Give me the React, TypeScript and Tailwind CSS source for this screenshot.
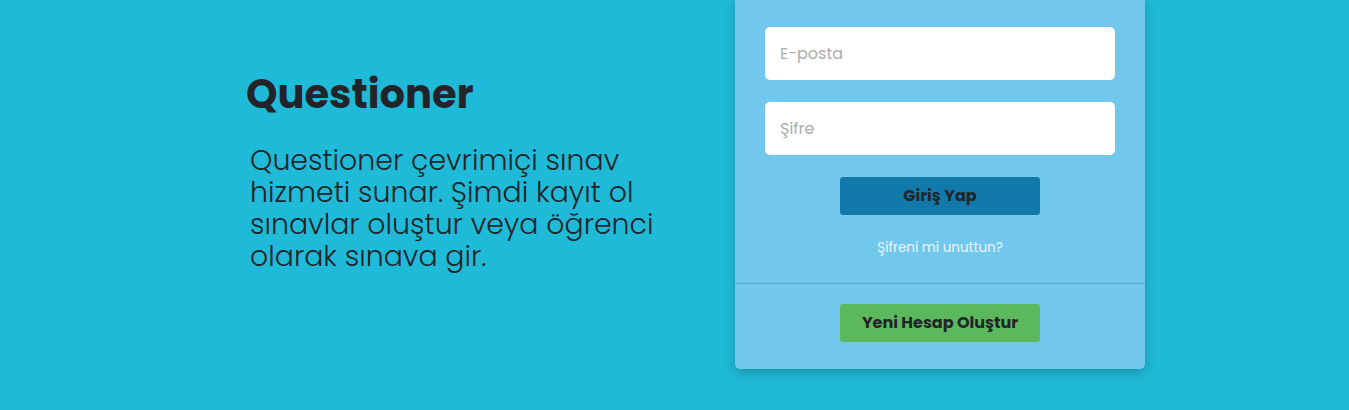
import { useState } from 'react'

// Giriş sayfası: solda tanıtım metni, sağda giriş kartı
export default function App() {
  const [email, setEmail] = useState('')
  const [sifre, setSifre] = useState('')

  return (
    <div
      className="w-full h-[410px] bg-[#1fbad8] flex overflow-hidden text-[#212529]"
      style={{ fontFamily: 'Poppins, Inter, "Noto Sans", sans-serif' }}
    >
      {/* Tanıtım metni */}
      <div className="w-[489px] ml-[246px] pt-[70px]">
        <h1 className="text-[40px] font-bold leading-[48px]">Questioner</h1>
        <p className="mt-[26px] ml-[4px] w-[430px] text-[28.4px] font-light leading-[32px]">
          Questioner çevrimiçi sınav hizmeti sunar. Şimdi kayıt ol sınavlar oluştur veya öğrenci
          olarak sınava gir.
        </p>
      </div>

      {/* Giriş kartı */}
      <div className="w-[410px] h-[369px] bg-[#72c7ec] rounded-b-[5px] shadow-[0_4px_12px_rgba(0,0,0,0.22)] flex flex-col">
        <form className="flex flex-col px-[30px] pt-[27px]" onSubmit={(e) => e.preventDefault()}>
          <input
            type="email"
            value={email}
            onChange={(e) => setEmail(e.target.value)}
            placeholder="E-posta"
            className="h-[53px] rounded-[5px] bg-white px-[15px] text-[16px] outline-none placeholder:text-[#acacac]"
          />
          <input
            type="password"
            value={sifre}
            onChange={(e) => setSifre(e.target.value)}
            placeholder="Şifre"
            className="mt-[22px] h-[53px] rounded-[5px] bg-white px-[15px] text-[16px] outline-none placeholder:text-[#acacac]"
          />
          <button
            type="submit"
            className="mt-[22px] self-center w-[200px] h-[38px] rounded-[3px] bg-[#117aab] text-[16px] font-bold"
          >
            Giriş Yap
          </button>
          <a href="#" className="mt-[23px] self-center text-[13.5px] text-[#eef5fa] leading-[20px]">
            Şifreni mi unuttun?
          </a>
        </form>

        <div className="mt-[25px] border-t border-[#5aa6cc]" />

        <div className="flex justify-center pt-[20px]">
          <button className="w-[200px] h-[38px] rounded-[3px] bg-[#5cb85c] text-[16px] font-bold">
            Yeni Hesap Oluştur
          </button>
        </div>
      </div>
    </div>
  )
}
